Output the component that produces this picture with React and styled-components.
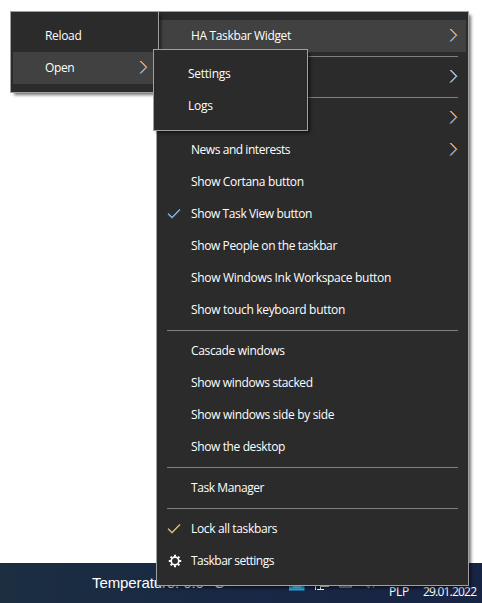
import React from "react";
import styled, { createGlobalStyle } from "styled-components";

const Global = createGlobalStyle`
  * { box-sizing: border-box; }
  html, body { margin: 0; background: #fff; }
  body { font-family: "Open Sans", "Noto Sans", sans-serif; overflow: hidden; }
`;
const Desktop = styled.div`
  position: relative; width: 482px; height: 603px; background: #fff; overflow: hidden;
  display: flex; flex-direction: column; justify-content: flex-end;
`;
const Menu = styled.nav`
  position: absolute; left: ${p => p.$x}px; top: ${p => p.$y}px; width: ${p => p.$w}px;
  padding: 8px 2px; background: #2b2b2b; border: 1px solid #a0a0a0;
  box-shadow: 3px 3px 3px -1px rgba(0,0,0,.55);
`;
const Row = styled.div`
  display: grid; grid-template-columns: 32px 1fr 17px; align-items: center;
  height: 32px; background: ${p => (p.$active ? "#414141" : "transparent")};
`;
const Label = styled.span`
  font-size: 12px; line-height: 16px; color: #fff; white-space: pre;
  letter-spacing: ${p => p.$track}px;
`;
const Mark = styled.span`display: flex; padding-left: ${p => p.$indent || 8}px;`;
const Separator = styled.hr`
  height: 1px; margin: 4px 8px; border: 0; background: #808080;
`;
const Taskbar = styled.footer`
  display: flex; align-items: flex-start; height: 40px; padding-left: 92px;
  background: linear-gradient(90deg, #1c2e40, #182845 50%, #182444);
`;
const Temperature = styled.span`
  width: 197px; padding-top: 10px; font: 15px/20px "Liberation Sans", sans-serif; color: #fff;
  letter-spacing: -0.1px; white-space: pre;
`;
const Tray = styled.svg`display: block;`;
const TrayText = styled.span`
  padding-top: 21px; width: ${p => p.$w}px; font-size: 12px; line-height: 16px; color: #fff;
  letter-spacing: ${p => p.$track}px; white-space: pre;
`;
const Arrow = styled.svg`display: block; margin-bottom: 2px;`;

const Chevron = ({ edge = "#f0974a" }) => (
  <Arrow width="10" height="14" viewBox="0 0 10 14" fill="none">
    <path d="M.8 1 6.800 7.200l-6 6.200" stroke="#4f92d8" strokeWidth=".9" />
    <path d="M1.400 1 7.400 7.200l-6 6.200" stroke="#fff" strokeWidth=".7" />
    <path d="M2 1 8 7.200l-6 6.200" stroke={edge} strokeWidth=".9" />
  </Arrow>
);
const Check = ({ edge, fill }) => (
  <svg width="14" height="12" viewBox="0 0 14 12" fill="none">
    <path d="m1 5.800 4 4L13 1.500" stroke={edge} strokeWidth="1.400" />
    <path d="m1.300 5.500 3.800 3.600L12.600 1.500" stroke={fill} strokeWidth=".4" />
  </svg>
);
const Gear = () => (
  <svg width="14" height="14" viewBox="-7 -7 14 14" fill="none" stroke="#fff">
    <circle r="3.800" strokeWidth="1.700" />
    {[0, 45, 90, 135, 180, 225, 270, 315].map(a => (
      <path key={a} d="M0-4.200V-6.200" strokeWidth="2" transform={`rotate(${a})`} />
    ))}
  </svg>
);

const Item = ({ text, track = -0.35, active, more, edge, mark, indent }) => (
  <Row $active={active}>
    <Mark $indent={indent}>{mark}</Mark>
    <Label $track={track}>{text}</Label>
    {more && <Chevron edge={edge} />}
  </Row>
);

export default function App() {
  return (
    <Desktop>
      <Global />
      <Taskbar>
        <Temperature>Temperature: 0.0 °C</Temperature>
        <Tray width="100" height="40" viewBox="289 563 100 40" fill="none">
          <path d="M289 576h15.500v14.500H289z" fill="#2daae1" />
          <path d="M293 584h8v4h-8z" fill="#8bd0ef" />
          <path d="M315.500 590v-4M317 589.500h7M320.500 586v4M320 586.500h9" stroke="#fff" />
          <path d="M339.500 580v7h12v-7" stroke="#ddd" />
          <path d="m363 583 6 5v-8M373 588l3-5" stroke="#aaa" />
        </Tray>
        <TrayText $w={34} $track={-0.2}>PLP</TrayText>
        <TrayText $w={59} $track={-0.8}>29.01.2022</TrayText>
      </Taskbar>
      <Menu $x={156} $y={11} $w={313}>
        <Item text="HA Taskbar Widget" track={-0.35} active more />
        <Separator />
        <Item more edge="#8fd6e6" />
        <Separator />
        <Item more />
        <Item text="News and interests" track={-0.45} more />
        <Item text="Show Cortana button" track={-0.34} />
        <Item text="Show Task View button" track={-0.39} mark={<Check edge="#5f9ce8" fill="#fff" />} />
        <Item text="Show People on the taskbar" track={-0.39} />
        <Item text="Show Windows Ink Workspace button" track={-0.32} />
        <Item text="Show touch keyboard button" track={-0.31} />
        <Separator />
        <Item text="Cascade windows" />
        <Item text="Show windows stacked" />
        <Item text="Show windows side by side" track={-0.32} />
        <Item text="Show the desktop" track={-0.38} />
        <Separator />
        <Item text="Task Manager" track={-0.42} />
        <Separator />
        <Item text="Lock all taskbars" mark={<Check edge="#d0a65a" fill="#fff" />} />
        <Item text="Taskbar settings" track={-0.5} mark={<Gear />} indent={9} />
      </Menu>
      <Menu $x={10} $y={11} $w={149}>
        <Item text="Reload" track={-0.33} />
        <Item text="Open" active more />
      </Menu>
      <Menu $x={153} $y={49} $w={155}>
        <Item text="Settings" track={-0.25} />
        <Item text="Logs" track={-0.25} />
      </Menu>
    </Desktop>
  );
}
